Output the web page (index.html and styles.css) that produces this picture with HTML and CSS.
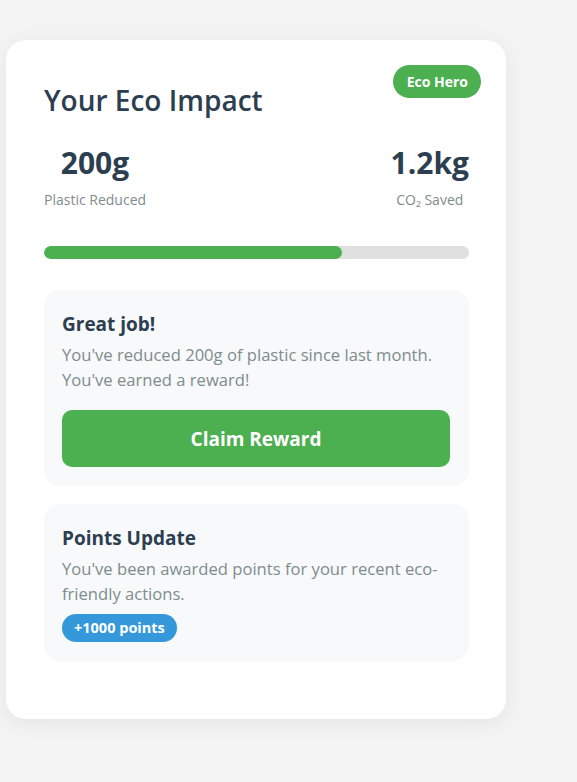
FILE: index.html
```html
<!DOCTYPE html>
<html>
<head>
<meta charset="utf-8">
<link rel="stylesheet" href="styles.css">
</head>
<body>
<div class="card">
  <span class="badge">Eco Hero</span>
  <h2 class="title">Your Eco Impact</h2>
  <div class="stats">
    <div class="stat">
      <div class="stat-value">200g</div>
      <div class="stat-label">Plastic Reduced</div>
    </div>
    <div class="stat">
      <div class="stat-value">1.2kg</div>
      <div class="stat-label">CO₂ Saved</div>
    </div>
  </div>
  <div class="progress"><div class="progress-fill" style="width:70%"></div></div>
  <div class="box">
    <h3 class="box-title">Great job!</h3>
    <p class="box-text">You've reduced 200g of plastic since last month. You've earned a reward!</p>
    <button class="claim">Claim Reward</button>
  </div>
  <div class="box">
    <h3 class="box-title">Points Update</h3>
    <p class="box-text">You've been awarded points for your recent eco-friendly actions.</p>
    <span class="points">+1000 points</span>
  </div>
</div>
</body>
</html>
```

FILE: styles.css
```css
* { box-sizing: border-box; }
html, body { margin: 0; }
body {
  background: #f3f3f3;
  font-family: "Open Sans", "Noto Sans", sans-serif;
  padding: 40px 0 0 6px;
  min-height: 782px;
}
.card {
  position: relative;
  width: 500px;
  background: #fff;
  border-radius: 20px;
  padding: 38px 37px 58px 38px;
  box-shadow: 0 4px 20px rgba(0,0,0,0.06);
}
.badge {
  position: absolute;
  top: 25px;
  right: 25px;
  background: #4caf50;
  color: #fff;
  font-weight: 700;
  font-size: 14px;
  line-height: 33px;
  height: 33px;
  padding: 0 13px 0 14px;
  border-radius: 17px;
}
.title {
  margin: 4px 0 0;
  font-size: 28px;
  line-height: 36px;
  font-weight: 600;
  color: #2c3e50;
}
.stats {
  display: flex;
  justify-content: space-between;
  margin-top: 25px;
}
.stat { text-align: center; }
.stat-value {
  font-size: 30px;
  font-weight: 700;
  line-height: 40px;
  color: #2c3e50;
}
.stat-label {
  font-size: 14px;
  line-height: 20px;
  margin-top: 7px;
  color: #7f8c8d;
}
.progress {
  margin-top: 36px;
  height: 13px;
  background: #e0e0e0;
  border-radius: 7px;
  overflow: hidden;
}
.progress-fill {
  height: 100%;
  background: #4caf50;
  border-radius: 7px;
}
.box {
  margin-top: 31px;
  background: #f7f9fa;
  border-radius: 16px;
  padding: 20px 19px 19px 18px;
}
.box + .box { margin-top: 18px; }
.box-title {
  margin: 0;
  font-size: 19px;
  line-height: 28px;
  font-weight: 700;
  color: #2c3e50;
}
.box-text {
  margin: 4px 0 0;
  font-size: 16.6px;
  line-height: 25px;
  color: #7f8c8d;
}
.claim {
  display: block;
  width: 100%;
  margin-top: 18px;
  height: 57px;
  border: none;
  border-radius: 10px;
  background: #4caf50;
  color: #fff;
  font-family: inherit;
  font-size: 19px;
  font-weight: 700;
}
.points {
  display: inline-block;
  margin-top: 8px;
  background: #3498db;
  color: #fff;
  font-size: 14.5px;
  font-weight: 700;
  line-height: 28px;
  height: 28px;
  padding: 0 12px;
  border-radius: 14px;
}
```
